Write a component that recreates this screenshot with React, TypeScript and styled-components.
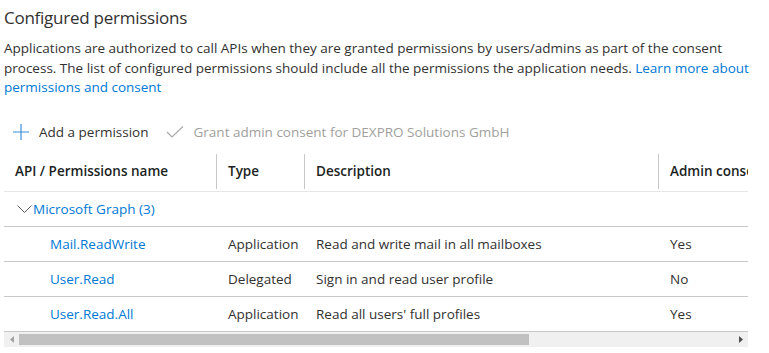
import React from 'react';
import styled, {createGlobalStyle} from "styled-components";

const GlobalStyle = createGlobalStyle`
  body {
    margin: 0;
    background: #ffffff;
    font-family: "Open Sans", "Noto Sans", sans-serif;
    color: #323130;
  }
`

type PermissionType = {
    name: string
    type: string
    description: string
    admin: string
}

const permissions: PermissionType[] = [
    {name: 'Mail.ReadWrite', type: 'Application', description: 'Read and write mail in all mailboxes', admin: 'Yes'},
    {name: 'User.Read', type: 'Delegated', description: 'Sign in and read user profile', admin: 'No'},
    {name: 'User.Read.All', type: 'Application', description: "Read all users' full profiles", admin: 'Yes'},
]

const PlusIcon = () => (
    <svg width="16" height="16" viewBox="0 0 16 16">
        <path d="M8 0v16M0 8h16" stroke="#3a8fd9" strokeWidth="1.2" fill="none"/>
    </svg>
)

const CheckIcon = () => (
    <svg width="18" height="12" viewBox="0 0 18 12">
        <path d="M1 6l5 5L17 0.5" stroke="#a8a8a8" strokeWidth="1.2" fill="none"/>
    </svg>
)

const ChevronIcon = () => (
    <svg width="15" height="8" viewBox="0 0 15 8">
        <path d="M0.5 0.5l7 7 7-7" stroke="#5c5c5c" strokeWidth="1" fill="none"/>
    </svg>
)

export default function App() {
    return (
        <Page>
            <GlobalStyle/>
            <Title>Configured permissions</Title>
            <Intro>
                Applications are authorized to call APIs when they are granted permissions by users/admins as part of the consent
                process. The list of configured permissions should include all the permissions the application needs. <Link>Learn more about
                permissions and consent</Link>
            </Intro>
            <Toolbar>
                <ToolButton>
                    <PlusIcon/>
                    Add a permission
                </ToolButton>
                <ToolButton disabled>
                    <CheckIcon/>
                    Grant admin consent for DEXPRO Solutions GmbH
                </ToolButton>
            </Toolbar>
            <TableWrap>
                <Table>
                    <HeaderRow>
                        <HeaderCell>API / Permissions name</HeaderCell>
                        <HeaderCell divider>Type</HeaderCell>
                        <HeaderCell divider>Description</HeaderCell>
                        <HeaderCell divider>Admin consent required</HeaderCell>
                    </HeaderRow>
                    <GroupRow>
                        <GroupToggle>
                            <ChevronIcon/>
                            <Link>Microsoft Graph (3)</Link>
                        </GroupToggle>
                    </GroupRow>
                    {permissions.map(p => (
                        <Row key={p.name}>
                            <Cell indent><Link>{p.name}</Link></Cell>
                            <Cell>{p.type}</Cell>
                            <Cell>{p.description}</Cell>
                            <Cell>{p.admin}</Cell>
                        </Row>
                    ))}
                </Table>
                <ScrollBar>
                    <ScrollArrow>
                        <svg width="4" height="7" viewBox="0 0 4 7"><path d="M4 0v7L0 3.5z" fill="#a3a3a3"/></svg>
                    </ScrollArrow>
                    <ScrollTrack>
                        <ScrollThumb style={{width: `${(510 / 714) * 100}%`}}/>
                    </ScrollTrack>
                    <ScrollArrow>
                        <svg width="4" height="7" viewBox="0 0 4 7"><path d="M0 0v7l4-3.5z" fill="#505050"/></svg>
                    </ScrollArrow>
                </ScrollBar>
            </TableWrap>
        </Page>
    );
}

const Page = styled.div`
  padding: 5px 0 0 4px;
  width: 765px;
  overflow: hidden;
`

const Title = styled.h2`
  margin: 0;
  font-size: 17px;
  font-weight: 400;
  line-height: 25px;
  letter-spacing: -0.25px;
`

const Intro = styled.p`
  margin: 9px 0 0;
  font-size: 13.5px;
  line-height: 19.5px;
  width: 750px;
`

const Link = styled.span`
  color: #0078d4;
`

const Toolbar = styled.div`
  display: flex;
  align-items: center;
  gap: 17px;
  height: 33px;
  margin-top: 18px;
  padding-left: 9px;
`

const ToolButton = styled.div<{ disabled?: boolean }>`
  display: flex;
  align-items: center;
  gap: 10px;
  font-size: 13.5px;
  color: ${props => props.disabled ? '#a19f9d' : '#323130'};
`

const TableWrap = styled.div`
  width: 744px;
  overflow: hidden;
`

const Table = styled.div`
  width: 900px;
`

const columns = `212px 88px 354px 246px`

const HeaderRow = styled.div`
  display: grid;
  grid-template-columns: ${columns};
  height: 42px;
  align-items: center;
  border-bottom: 1px solid #e6e6e6;
`

const HeaderCell = styled.div<{ divider?: boolean }>`
  display: flex;
  align-items: center;
  height: 35px;
  margin-top: 3px;
  padding-left: 11px;
  border-left: ${props => props.divider ? '1px solid #c8c8c8' : 'none'};
  font-size: 13.5px;
  font-weight: 600;
  color: #201f1e;
  white-space: nowrap;
`

const GroupRow = styled.div`
  display: flex;
  align-items: center;
  height: 34px;
  border-bottom: 1px solid #c8c8c8;
  padding-left: 13px;
`

const GroupToggle = styled.div`
  display: flex;
  align-items: center;
  gap: 1px;
  font-size: 13.5px;
`

const Row = styled.div`
  display: grid;
  grid-template-columns: ${columns};
  height: 34px;
  align-items: center;
  border-bottom: 1px solid #c8c8c8;
  font-size: 13.5px;
`

const Cell = styled.div<{ indent?: boolean }>`
  padding-left: ${props => props.indent ? '46px' : '12px'};
  white-space: nowrap;
`

const ScrollBar = styled.div`
  display: flex;
  align-items: center;
  height: 15px;
  background: #f0f0f0;
`

const ScrollArrow = styled.div`
  display: flex;
  align-items: center;
  justify-content: center;
  width: 15px;
  height: 15px;
`

const ScrollTrack = styled.div`
  flex: 1;
  height: 11px;
`

const ScrollThumb = styled.div`
  height: 100%;
  background: #c1c1c1;
`
